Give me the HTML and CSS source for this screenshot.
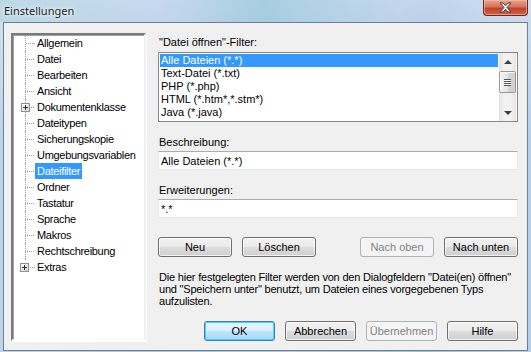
FILE: index.html
```html
<!DOCTYPE html>
<html lang="de">

<head>
  <meta charset="UTF-8">
  <title>Einstellungen</title>
  <link rel="stylesheet" href="styles.css">
</head>

<body>
  <div class="Window">
    <div class="TitleBar">
      <span class="TitleBar-text">Einstellungen</span>
      <button class="CloseBtn" aria-label="Schließen">
        <svg viewBox="0 0 13 11" width="13" height="11">
          <path d="M1 1h3l2.5 2.8L9 1h3L8 5.5 12 10H9L6.5 7.2 4 10H1l4-4.5z" fill="#fff" stroke="#3b3b3b" stroke-width="1" stroke-linejoin="round" />
        </svg>
      </button>
    </div>
    <div class="Client">
      <ul class="Tree">
        <li class="Tree-item Tree-item--first"><span class="Tree-line"></span><span class="Tree-label">Allgemein</span></li>
        <li class="Tree-item"><span class="Tree-line"></span><span class="Tree-label">Datei</span></li>
        <li class="Tree-item"><span class="Tree-line"></span><span class="Tree-label">Bearbeiten</span></li>
        <li class="Tree-item"><span class="Tree-line"></span><span class="Tree-label">Ansicht</span></li>
        <li class="Tree-item"><span class="Tree-line"><span class="Tree-plus"></span></span><span class="Tree-label">Dokumentenklasse</span></li>
        <li class="Tree-item"><span class="Tree-line"></span><span class="Tree-label">Dateitypen</span></li>
        <li class="Tree-item"><span class="Tree-line"></span><span class="Tree-label">Sicherungskopie</span></li>
        <li class="Tree-item"><span class="Tree-line"></span><span class="Tree-label">Umgebungsvariablen</span></li>
        <li class="Tree-item"><span class="Tree-line"></span><span class="Tree-label is-selected">Dateifilter</span></li>
        <li class="Tree-item"><span class="Tree-line"></span><span class="Tree-label">Ordner</span></li>
        <li class="Tree-item"><span class="Tree-line"></span><span class="Tree-label">Tastatur</span></li>
        <li class="Tree-item"><span class="Tree-line"></span><span class="Tree-label">Sprache</span></li>
        <li class="Tree-item"><span class="Tree-line"></span><span class="Tree-label">Makros</span></li>
        <li class="Tree-item"><span class="Tree-line"></span><span class="Tree-label">Rechtschreibung</span></li>
        <li class="Tree-item Tree-item--last"><span class="Tree-line"><span class="Tree-plus"></span></span><span class="Tree-label">Extras</span></li>
      </ul>

      <div class="Panel">
        <label class="Panel-label">"Datei öffnen"-Filter:</label>
        <div class="ListBox">
          <ul class="ListBox-items">
            <li class="is-selected">Alle Dateien (*.*)</li>
            <li>Text-Datei (*.txt)</li>
            <li>PHP (*.php)</li>
            <li>HTML (*.htm*,*.stm*)</li>
            <li>Java (*.java)</li>
            <li>Textdateien mit Umlauten</li>
          </ul>
          <div class="ScrollBar">
            <span class="ScrollBar-arrow ScrollBar-arrow--up"></span>
            <span class="ScrollBar-thumb"><span class="ScrollBar-grip"></span></span>
            <span class="ScrollBar-track"></span>
            <span class="ScrollBar-arrow ScrollBar-arrow--down"></span>
          </div>
        </div>

        <label class="Panel-label Panel-label--gap" for="desc">Beschreibung:</label>
        <input class="Edit" id="desc" type="text" value="Alle Dateien (*.*)">

        <label class="Panel-label Panel-label--gap" for="ext">Erweiterungen:</label>
        <input class="Edit" id="ext" type="text" value="*.*">

        <div class="ButtonRow">
          <div class="ButtonRow-group">
            <button class="Btn Btn--wide">Neu</button>
            <button class="Btn Btn--wide">Löschen</button>
          </div>
          <div class="ButtonRow-group">
            <button class="Btn Btn--wide" disabled>Nach oben</button>
            <button class="Btn Btn--wide">Nach unten</button>
          </div>
        </div>

        <p class="Panel-hint">Die hier festgelegten Filter werden von den Dialogfeldern "Datei(en) öffnen"<br>
          und "Speichern unter" benutzt, um Dateien eines vorgegebenen Typs<br>
          aufzulisten.</p>

        <div class="DialogButtons">
          <button class="Btn Btn--default">OK</button>
          <button class="Btn">Abbrechen</button>
          <button class="Btn" disabled>Übernehmen</button>
          <button class="Btn">Hilfe</button>
        </div>
      </div>
    </div>
  </div>
</body>

</html>
```

FILE: styles.css
```css
* {
  box-sizing: border-box;
}

body {
  margin: 0;
  font-family: "Liberation Sans", Arial, sans-serif;
  font-size: 11px;
  color: #000;
}

ul {
  margin: 0;
  padding: 0;
  list-style: none;
}

.Window {
  width: 531px;
  height: 352px;
  display: flex;
  flex-direction: column;
  background:
    linear-gradient(180deg, rgba(255, 255, 255, .35), rgba(255, 255, 255, 0) 40%),
    linear-gradient(90deg, #bcd3ea 0%, #a9c5e3 30%, #b1cae6 55%, #9fbee0 80%, #b6cee8 100%);
}

.TitleBar {
  height: 23px;
  display: flex;
  justify-content: space-between;
  align-items: flex-start;
  padding-left: 4px;
  background: linear-gradient(90deg, rgba(120, 190, 200, .25), rgba(120, 190, 200, 0) 30%, rgba(100, 180, 200, .35) 50%, rgba(120, 190, 200, 0) 75%);
}

.TitleBar-text {
  font-family: "Noto Sans", sans-serif;
  font-size: 11px;
  line-height: 22px;
  color: #1e1e1e;
  text-shadow: 0 0 6px #fff, 0 0 3px #fff;
}

.CloseBtn {
  appearance: none;
  margin: 0 3px 0 0;
  padding: 0;
  width: 45px;
  height: 16px;
  border: 1px solid #6a2a22;
  border-top: 0;
  border-radius: 0 0 4px 4px;
  background: linear-gradient(180deg, #e6a593 0%, #d7735b 45%, #c0432b 55%, #cf6448 100%);
  box-shadow: inset 0 0 0 1px rgba(255, 190, 170, .6);
  display: flex;
  justify-content: center;
  align-items: center;
}

.CloseBtn svg {
  display: block;
}

.Client {
  flex: 1;
  margin: 0 3px 3px;
  border: 1px solid #6e7f92;
  background: #f0f0f0;
  display: flex;
  padding: 10px 9px 9px 7px;
  gap: 12px;
}

/* tree view */

.Tree {
  width: 135px;
  flex-shrink: 0;
  background: #fff;
  border: 2px solid;
  border-color: #7a7a7a #f0f0f0 #fff #7a7a7a;
  box-shadow: inset 1px 1px 0 #a0a0a0, 1px 1px 0 #fff;
  padding-left: 12px;
  overflow: hidden;
}

.Tree-item {
  display: flex;
  align-items: center;
  height: 16px;
}

.Tree-line {
  width: 10px;
  height: 16px;
  flex-shrink: 0;
  display: flex;
  align-items: center;
  border-left: 1px dotted #a0a0a0;
  background: linear-gradient(90deg, #a0a0a0 50%, transparent 50%) 1px 50% / 2px 1px repeat-x;
}

.Tree-item--first .Tree-line {
  border-left: 0;
  padding-left: 1px;
  background:
    linear-gradient(90deg, #a0a0a0 50%, transparent 50%) 1px 50% / 2px 1px repeat-x,
    linear-gradient(180deg, #a0a0a0 50%, transparent 50%) 0 9px / 1px 2px repeat-y;
}

.Tree-item--last .Tree-line {
  border-left: 0;
  padding-left: 1px;
  background:
    linear-gradient(90deg, #a0a0a0 50%, transparent 50%) 1px 50% / 2px 1px repeat-x,
    linear-gradient(180deg, #a0a0a0 50%, transparent 50%) 0 0 / 1px 2px repeat-y;
  background-size: 2px 1px, 1px 2px;
  background-repeat: repeat-x, no-repeat;
}

.Tree-plus {
  width: 9px;
  height: 9px;
  margin-left: -5px;
  border: 1px solid #919191;
  background:
    linear-gradient(#303030, #303030) center / 5px 1px no-repeat,
    linear-gradient(#303030, #303030) center / 1px 5px no-repeat,
    linear-gradient(135deg, #fff, #d6d6d6);
}

.Tree-item--last .Tree-plus {
  margin-left: -6px;
}

.Tree-label {
  padding: 0 2px;
  line-height: 16px;
  letter-spacing: -.3px;
  white-space: nowrap;
}

.Tree-label.is-selected {
  background: #3399ff;
  color: #fff;
}

/* right panel */

.Panel {
  flex: 1;
  display: flex;
  flex-direction: column;
  padding-top: 3px;
}

.Panel-label {
  display: block;
  line-height: 13px;
  padding-left: 1px;
  margin-bottom: 3px;
}

.Panel-label--gap {
  margin-top: 14px;
  margin-bottom: 2px;
}

.ListBox {
  height: 70px;
  border: 1px solid #828790;
  background: #fff;
  display: flex;
  overflow: hidden;
}

.ListBox-items {
  flex: 1;
  padding: 1px 1px 0;
}

.ListBox-items li {
  height: 13px;
  line-height: 13px;
  padding-left: 1px;
  white-space: nowrap;
}

.ListBox-items li.is-selected {
  background: #3399ff;
  color: #fff;
}

.ScrollBar {
  width: 17px;
  flex-shrink: 0;
  display: flex;
  flex-direction: column;
  background: linear-gradient(90deg, #e3e3e3, #f2f2f2 30%, #f2f2f2 70%, #e3e3e3);
  margin-right: 1px;
}

.ScrollBar-arrow {
  height: 17px;
  flex-shrink: 0;
  display: flex;
  justify-content: center;
  align-items: center;
}

.ScrollBar-arrow::after {
  content: "";
  border-left: 4px solid transparent;
  border-right: 4px solid transparent;
}

.ScrollBar-arrow--up::after {
  border-bottom: 4px solid #404040;
}

.ScrollBar-arrow--down::after {
  border-top: 4px solid #404040;
}

.ScrollBar-thumb {
  height: 22px;
  margin: 1px 0 0;
  border: 1px solid #979797;
  border-radius: 2px;
  background: linear-gradient(90deg, #f2f2f2, #e6e6e6 50%, #d6d6d6 51%, #cfcfcf);
  box-shadow: inset 1px 1px 0 #fff;
  display: flex;
  justify-content: center;
  align-items: center;
}

.ScrollBar-grip {
  width: 7px;
  height: 7px;
  background: linear-gradient(180deg, #555 1px, #fff 1px, #fff 2px) 0 0 / 7px 2px repeat-y;
}

.ScrollBar-track {
  flex: 1;
}

.Edit {
  height: 19px;
  width: 100%;
  margin: 0;
  border: 1px solid #e3e9ef;
  border-top-color: #abadb3;
  background: #fff;
  font: inherit;
  padding: 0 2px;
  outline: 0;
}

.ButtonRow {
  display: flex;
  justify-content: space-between;
  margin-top: 19px;
}

.ButtonRow-group {
  display: flex;
  gap: 10px;
}

.Btn {
  appearance: none;
  width: 71px;
  height: 20px;
  margin: 0;
  padding: 0;
  font: inherit;
  color: #000;
  border: 1px solid #707070;
  border-radius: 3px;
  background: linear-gradient(180deg, #f2f2f2 0%, #ebebeb 49%, #dddddd 50%, #cfcfcf 100%);
  box-shadow: inset 0 0 0 1px rgba(255, 255, 255, .7);
}

.Btn--wide {
  width: 74px;
}

.Btn:disabled {
  color: #838383;
  border-color: #adb2b5;
  background: #f4f4f4;
  box-shadow: none;
}

.Btn--default {
  border-color: #3c7fb1;
  background: linear-gradient(180deg, #eaf6fd 0%, #d9f0fc 49%, #bee6fd 50%, #a7d9f5 100%);
  box-shadow: inset 0 0 0 1px #48d1fd;
}

.Panel-hint {
  margin: 14px 0 0 1px;
  line-height: 12px;
  letter-spacing: -.2px;
  white-space: nowrap;
}

.DialogButtons {
  display: flex;
  justify-content: flex-end;
  gap: 10px;
  margin-top: 14px;
}
```
